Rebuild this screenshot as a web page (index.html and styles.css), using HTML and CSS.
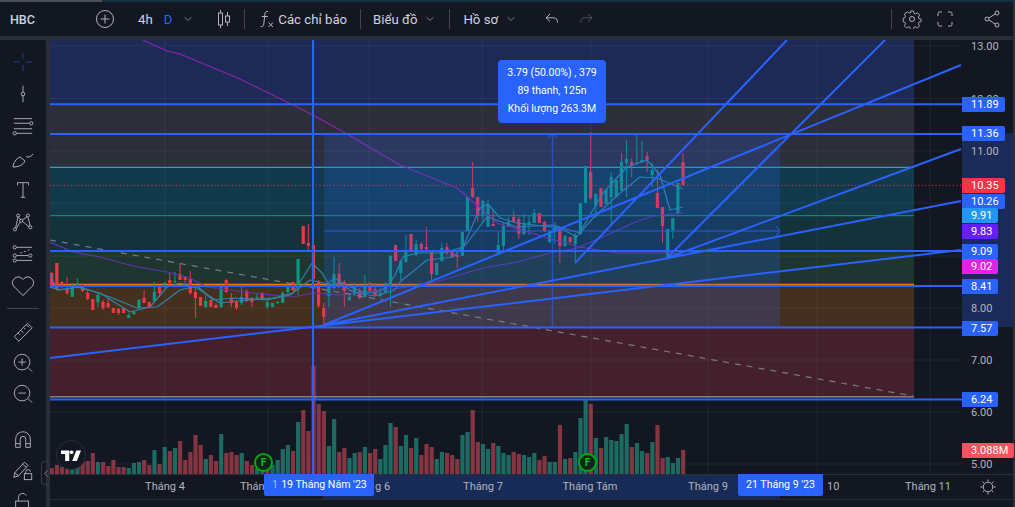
FILE: index.html
```html
<!DOCTYPE html>
<html lang="en">

<head>
    <meta charset="UTF-8">
    <title>HBC</title>
    <link rel="stylesheet" href="styles.css">
</head>

<body>
    <div class="load-strip"><div class="load-strip-fill"></div></div>

    <header class="toolbar">
        <span class="symbol">HBC</span>
        <svg class="tb-icon add-icon" width="20" height="20" viewBox="0 0 20 20"><circle cx="10" cy="10" r="8.5"/><path d="M10 5.5v9M5.5 10h9"/></svg>
        <span class="tb-text interval">4h</span>
        <span class="tb-text interval-d">D</span>
        <svg class="chevron" width="10" height="6" viewBox="0 0 10 6"><path d="M1.5 1.2 5 4.4l3.5-3.2"/></svg>
        <svg class="tb-icon candle-icon" width="16" height="20" viewBox="0 0 16 20"><path d="M4.5 1v3M4.5 16v3M11.5 3v4M11.5 13v4"/><rect x="2.5" y="4" width="4" height="12"/><rect x="9.5" y="7" width="4" height="6"/></svg>
        <div class="tb-divider"></div>
        <svg class="tb-icon fx-icon" width="16" height="18" viewBox="0 0 16 18"><path d="M9 1.5C6.5 1 6 2.5 5.8 4.5L4.8 14C4.5 16.5 3.5 17 1.5 16.5M2.8 6.5h6M9.5 12.5l4.500 4.500M14 12.500 9.500 17"/></svg>
        <span class="tb-text indicators">Các chỉ báo</span>
        <div class="tb-divider"></div>
        <span class="tb-text layout-btn">Biểu đồ</span>
        <svg class="chevron" width="10" height="6" viewBox="0 0 10 6"><path d="M1.5 1.2 5 4.4l3.5-3.2"/></svg>
        <div class="tb-divider"></div>
        <span class="tb-text profile-btn">Hồ sơ</span>
        <svg class="chevron" width="10" height="6" viewBox="0 0 10 6"><path d="M1.5 1.2 5 4.4l3.5-3.2"/></svg>
        <svg class="tb-icon undo-icon" width="14" height="12" viewBox="0 0 14 12"><path d="M5 1 1 4.8l4 3.7M1 4.8h7.500c2.500 0 4 1.700 4 4.700"/></svg>
        <svg class="tb-icon redo-icon" width="14" height="12" viewBox="0 0 14 12"><path d="M9 1l4 3.8-4 3.700M13 4.800H5.500c-2.500 0-4 1.700-4 4.700"/></svg>
        <div class="tb-spacer"></div>
        <div class="tb-divider"></div>
        <svg class="tb-icon gear-icon" width="20" height="20" viewBox="0 0 20 20"><path d="M8.3 1.200h3.400l.5 2.500 1.700.8 2.200-1.300 2.300 2.500-1.400 2.100.6 1.700 2.400.6v2.900l-2.400.6-.6 1.700 1.300 2.100-2.300 2.400-2.200-1.300-1.700.7-.5 2.500H8.300l-.5-2.500-1.700-.7-2.200 1.300-2.300-2.400 1.300-2.100-.6-1.700-2-.6V9.100l2-.6.6-1.700-1.300-2.100L4.900 2.200l2.200 1.300 1.700-.8z" transform="translate(.9 .9) scale(.91)"/><circle cx="10" cy="10" r="2.5"/></svg>
        <svg class="tb-icon full-icon" width="16" height="16" viewBox="0 0 16 16"><path d="M1 5V2.500Q1 1 2.500 1H5M11 1h2.500Q15 1 15 2.500V5M15 11v2.500Q15 15 13.500 15H11M5 15H2.500Q1 15 1 13.500V11"/></svg>
        <svg class="tb-icon share-icon" width="16" height="18" viewBox="0 0 16 18"><circle cx="13" cy="3" r="2"/><circle cx="3" cy="9" r="2"/><circle cx="13" cy="15" r="2"/><path d="M4.800 8 11.200 4M4.800 10l6.400 4"/></svg>
    </header>

    <div class="workspace">
        <aside class="tools">
            <button class="tool"><svg class="crosshair" viewBox="0 0 24 24"><path d="M12 2v7M12 15v7M2 12h7M15 12h7"/></svg></button>
            <button class="tool"><svg viewBox="0 0 24 24"><path d="M12 3v7M12 14v7"/><circle cx="12" cy="12" r="2"/></svg></button>
            <button class="tool"><svg viewBox="0 0 24 24"><path d="M2 4h20M2 9h17M2 15h20M5 20h17"/><circle cx="21" cy="9" r="1.8"/><circle cx="3" cy="20" r="1.8"/></svg></button>
            <button class="tool"><svg class="big" viewBox="0 0 24 24"><path d="M2 21c.5-4 2.500-8 7-10l5 4c-2 4-6 6-12 6ZM15 10c1 2 5 1 7-2"/></svg></button>
            <button class="tool"><svg viewBox="0 0 24 24"><path d="M6 7V4h12v3M12 4v16M9.500 20h5"/></svg></button>
            <button class="tool"><svg viewBox="0 0 24 24"><path d="M6.700 5.700 4 18.500M7.500 7l2 2.500M17.300 5.700l-6.200 4M17.800 7.500l2 9M11.500 11.500l7 5.500M9 12l-4.300 7"/><circle cx="6.700" cy="5" r="1.700"/><circle cx="17.300" cy="5" r="1.700"/><circle cx="10" cy="10.700" r="1.700"/><circle cx="20" cy="17.700" r="1.700"/><circle cx="3.300" cy="20" r="1.700"/></svg></button>
            <button class="tool"><svg viewBox="0 0 24 24"><path d="M5 4.700h17M5 13.700h13M5 19h17M9 11l2-.6M13 9.500l2-.6M17 8l2-.6"/><circle cx="3" cy="4.700" r="1.800"/><circle cx="3" cy="13.700" r="1.800"/><circle cx="20" cy="13.700" r="1.800"/><circle cx="3" cy="19" r="1.800"/></svg></button>
            <button class="tool"><svg class="big" viewBox="0 0 24 24"><path d="M12 21.500 2.800 12.300a5.700 5.700 0 0 1 8-8L12 5.500l1.200-1.200a5.700 5.700 0 0 1 8 8z"/></svg></button>
            <div class="tools-sep"></div>
            <button class="tool tool-tight"><svg viewBox="0 0 24 24"><path d="M2.500 17 17 2.500l5 5L7.500 22ZM6.500 13l2 2M9.500 10l3 3M12.500 7l2 2M15.500 4l3 3"/></svg></button>
            <button class="tool tool-tight"><svg viewBox="0 0 24 24"><circle cx="11" cy="11" r="8.500"/><path d="M17.500 17 22 21.500M7 11h8M11 7v8"/></svg></button>
            <button class="tool tool-tight"><svg viewBox="0 0 24 24"><circle cx="11" cy="11" r="8.500"/><path d="M17.500 17 22 21.500M7 11h8"/></svg></button>
            <button class="tool magnet"><svg viewBox="0 0 24 24"><path d="M4 20V11a8 8 0 0 1 16 0v9h-5v-9a3 3 0 0 0-6 0v9ZM4 16h5M15 16h5"/></svg></button>
            <button class="tool pencil"><svg viewBox="0 0 24 24"><path d="M2 20l1-5L13.500 3.500l4 3.500L7 18.500ZM11.500 5.500l4 3.500M3 15l4 3.500"/><rect x="13.500" y="16" width="8" height="6.500"/><path d="M15 16v-2a2.500 2.500 0 0 1 5 0"/></svg></button>
            <button class="tool lock"><svg viewBox="0 0 24 24"><rect x="4" y="11" width="14" height="11"/><path d="M7 11V7a4.500 4.500 0 0 1 8.500-2"/></svg></button>
        </aside>

        <main class="chart">
            <div class="pane">
                <svg id="plot" class="plot" viewBox="50 40 912 434" width="912" height="434">
                    <!-- fib zones -->
                    <rect x="50" y="40" width="864" height="64" fill="#1c2a55"/>
                    <rect x="50" y="104" width="864" height="63" fill="#2c2f3a"/>
                    <rect x="50" y="167" width="864" height="49" fill="#123a4b"/>
                    <rect x="50" y="216" width="864" height="35" fill="#14323a"/>
                    <rect x="50" y="251" width="864" height="34" fill="#1f3630"/>
                    <rect x="50" y="285" width="864" height="42" fill="#44301f"/>
                    <rect x="50" y="327" width="864" height="70" fill="#43202c"/>

                    <!-- grid -->
                    <g class="grid">
                        <path d="M165 40V474M268 40V474M369 40V474M482 40V474M591 40V474M708 40V474M817 40V474M930 40V474"/>
                        <path d="M50 46H962M50 98.500H962M50 151H962M50 203H962M50 256H962M50 308H962M50 360H962M50 412H962M50 464H962"/>
                    </g>

                    <g id="volume"></g>

                    <line x1="50" y1="167.300" x2="914" y2="167.300" stroke="#23a6b9" stroke-width="1.300"/>
                    <line x1="50" y1="215.700" x2="914" y2="215.700" stroke="#1a7f78" stroke-width="1.300"/>
                    <line x1="50" y1="284.500" x2="914" y2="284.500" stroke="#f57c00" stroke-width="1.500"/>
                    <line x1="50" y1="396.800" x2="914" y2="396.800" stroke="#9598a1" stroke-width="1.200"/>

                    <g id="candles"></g>

                    <!-- moving averages -->
                    <g class="ma">
                        <polyline stroke="#8e24aa" points="143,40 167,51 180,54 240,79 293,105 313,115 340,130 400,165 457,188 497,223 548,238 580,247 617,253 667,253 683,254"/>
                        <polyline stroke="#5e35b1" points="50,242 73,252 100,257 133,266 167,272 190,278 207,287 253,293 293,297 313,293 340,295 400,288 432,283 483,268 517,262 550,253 577,248 607,235 633,223 653,216 683,213"/>
                        <polyline stroke="#2e86ab" points="50,274 57,290 77,287 100,293 130,312 150,307 167,287 180,283 197,288 220,303 247,300 273,298 293,293 312,263 322,273 328,283 335,278 345,285 353,288 363,292 375,293 387,287 395,275 403,257 417,253 443,253 463,247 480,208 488,204 500,218 517,223 560,228 577,237 587,220 603,193 627,167 647,160 660,175 670,210 683,207"/>
                        <polyline stroke="#2e86ab" points="50,287 60,290 80,287 110,297 137,308 157,307 180,290 197,286 213,300 233,298 267,300 290,295 310,280 333,285 340,283 353,292 375,296 395,290 400,282 427,260 453,257 467,243 487,217 517,227 553,225 580,233 593,218 620,193 640,177 657,178 683,189"/>
                    </g>

                    <!-- date and price range -->
                    <rect x="324" y="133" width="456" height="194" fill="#2962ff" fill-opacity=".2"/>
                    <path class="range-mark" d="M324 231H779M776 226l4 5-4 5"/>
                    <path class="range-mark" d="M552.5 327V135M548 138l4.5-4 4.500 4"/>

                    <line class="dots" x1="50" y1="185.300" x2="962" y2="185.300"/>
                    <line class="dashes" x1="50" y1="240" x2="913" y2="396"/>

                    <!-- drawings -->
                    <g class="drawn">
                        <path d="M50 104.300H962M50 134H962M50 251H962M50 286H962M50 327.600H962M50 399.600H962"/>
                        <path d="M313 40V474"/>
                        <path d="M324 325 961 65M324 325 961 201M50 358 961 250M575 263 787 40M667 258 885 40M667 258 961 149"/>
                    </g>
                </svg>

                <div class="ruler-tip">
                    <div>3.79 (50.00%) , 379</div>
                    <div>89 thanh, 125n</div>
                    <div>Khối lượng 263.3M</div>
                </div>

                <div class="logo-badge">
                    <svg width="20" height="11" viewBox="0 0 34 22" preserveAspectRatio="none"><path d="M14 1H0v7h7v14h7ZM27 22h-8l7-21h8ZM18 8a3.500 3.500 0 1 0 0-7 3.500 3.500 0 0 0 0 7Z"/></svg>
                </div>
                <div class="earn-mark" style="left: 204px; top: 413px">F</div>
                <div class="earn-mark" style="left: 528px; top: 413px">F</div>
                <div class="collapse-btn">
                    <svg width="4" height="7" viewBox="0 0 4 7"><path d="M3.500 .5 .5 3.500l3 3"/></svg>
                </div>
            </div>

            <div class="price-axis">
                <div class="price-band"></div>
                <span class="price" style="top: 6px">13.00</span>
                <span class="price" style="top: 58.5px">12.00</span>
                <span class="price" style="top: 111px">11.00</span>
                <span class="price" style="top: 267.5px">8.00</span>
                <span class="price" style="top: 320px">7.00</span>
                <span class="price" style="top: 372px">6.00</span>
                <span class="price" style="top: 424px">5.00</span>
                <span class="tag tag-blue" style="top: 57px">11.89</span>
                <span class="tag tag-blue" style="top: 86px">11.36</span>
                <span class="tag tag-red" style="top: 138px">10.35</span>
                <span class="tag tag-blue" style="top: 153.5px">10.26</span>
                <span class="tag tag-sky" style="top: 168px">9.91</span>
                <span class="tag tag-violet" style="top: 183.5px">9.83</span>
                <span class="tag tag-blue" style="top: 204px">9.09</span>
                <span class="tag tag-pink" style="top: 219px">9.02</span>
                <span class="tag tag-blue" style="top: 239px">8.41</span>
                <span class="tag tag-blue" style="top: 281px">7.57</span>
                <span class="tag tag-blue" style="top: 352px">6.24</span>
                <span class="tag tag-vol" style="top: 402.5px">3.088M</span>
            </div>

            <div class="time-axis">
                <div class="time-band"></div>
                <span class="month" style="left: 65px">Tháng 4</span>
                <span class="month-cut" style="left: 190px">Thán</span>
                <span class="month-cut" style="left: 325px">g 6</span>
                <span class="month" style="left: 383px">Tháng 7</span>
                <span class="month" style="left: 490px">Tháng Tám</span>
                <span class="month" style="left: 608px">Tháng 9</span>
                <span class="month-cut" style="left: 777px">10</span>
                <span class="month" style="left: 828px">Tháng 11</span>
                <span class="date-tag date-from"><i>1</i>19 Tháng Năm '23</span>
                <span class="date-tag date-to">21 Tháng 9 '23</span>
            </div>
            <div class="axis-corner">
                <svg width="16" height="16" viewBox="0 0 16 16"><circle cx="8" cy="8" r="4.8"/><path d="M8 .5v2M8 13.500v2M.5 8h2M13.500 8h2M2.700 2.700l1.500 1.500M11.800 11.800l1.500 1.500M2.700 13.300l1.500-1.500M11.800 4.200l1.500-1.500"/></svg>
            </div>
        </main>
    </div>

    <script src="chart.js"></script>
</body>

</html>
```

FILE: styles.css
```css
* {
    box-sizing: border-box;
}

html,
body {
    height: 100%;
    overflow: hidden;
}

body {
    margin: 0;
    display: flex;
    flex-direction: column;
    background-color: #2a2e39;
    color: #d1d4dc;
    font-family: Roboto, "Noto Sans", sans-serif;
}

.load-strip {
    height: 2px;
    background-color: #17303f;
}

.load-strip-fill {
    width: 102px;
    height: 100%;
    background-color: #4a4f5b;
}

/* top bar */
.toolbar {
    flex: none;
    height: 34px;
    margin-right: 2px;
    display: flex;
    align-items: center;
    background-color: #131722;
    padding-left: 10px;
}

.symbol {
    width: 85px;
    font-size: 12.5px;
    font-weight: 500;
}

.tb-text {
    font-size: 13.2px;
}

.tb-icon {
    flex: none;
    fill: none;
    stroke: #b2b5be;
    stroke-width: 1;
}

.chevron {
    flex: none;
    margin-left: 8px;
    fill: none;
    stroke: #787b86;
    stroke-width: 1;
}

.tb-divider {
    flex: none;
    width: 1px;
    height: 20px;
    background-color: #434651;
}

.tb-spacer {
    flex: 1;
}

.add-icon {
    margin-right: 23px;
}

.interval-d {
    margin-left: 11px;
    color: #2962ff;
}

.interval-d + .chevron {
    margin-left: 11px;
}

.candle-icon {
    margin: 0 12px 0 23px;
}

.fx-icon {
    margin: 0 3px 0 14px;
}

.indicators {
    margin-right: 13px;
}

.layout-btn {
    margin-left: 12px;
}

.profile-btn {
    margin-left: 13px;
}

.chevron + .tb-divider {
    margin-left: 14px;
}

.undo-icon {
    margin-left: 29px;
}

.redo-icon {
    margin-left: 20px;
    stroke: #50535e;
}

.gear-icon {
    margin-left: 10px;
}

.full-icon {
    margin-left: 15px;
}

.share-icon {
    margin: 0 13px 0 31px;
}

.workspace {
    flex: 1;
    display: flex;
    margin-top: 4px;
    min-height: 0;
}

/* left drawing tools */
.tools {
    flex: none;
    width: 46px;
    padding-top: 6px;
    margin-right: 4px;
    display: flex;
    flex-direction: column;
    align-items: center;
    background-color: #131722;
    border-top-right-radius: 3px;
}

.tool {
    flex: none;
    width: 46px;
    height: 32px;
    padding: 0;
    border: none;
    background: none;
    display: flex;
    align-items: center;
    justify-content: center;
}

.tool svg {
    width: 22px;
    height: 22px;
    fill: none;
    stroke: #b2b5be;
    stroke-width: 1;
}

.tool svg.big {
    width: 24px;
    height: 24px;
}

.tool svg.crosshair {
    stroke: #24439e;
}

.tools-sep {
    flex: none;
    width: 32px;
    height: 1px;
    margin: 6px 0 7px;
    background-color: #434651;
}

.tool-tight {
    height: 31px;
}

.tool.magnet {
    margin-top: 15px;
}

.tool.pencil {
    height: 28px;
}

.tool.lock {
    height: 36px;
}

/* chart */
.chart {
    flex: 1;
    display: grid;
    grid-template-columns: 912px 51px;
    grid-template-rows: 434px 26px;
    align-content: start;
    background-color: #131722;
    margin-right: 2px;
    height: 100%;
}

.pane {
    position: relative;
    background-color: #131722;
}

.plot {
    display: block;
}

.grid path {
    fill: none;
    stroke: #ffffff;
    stroke-opacity: .055;
    stroke-width: 1;
}

.ma polyline {
    fill: none;
    stroke-width: 1.2;
    stroke-linejoin: round;
}

.range-mark {
    fill: none;
    stroke: #2962ff;
    stroke-width: 1.5;
    stroke-opacity: .55;
}

.dots {
    stroke: #f23645;
    stroke-width: 1;
    stroke-dasharray: 1 2.5;
}

.dashes {
    stroke: #787b86;
    stroke-width: 1.2;
    stroke-dasharray: 6 6;
}

.drawn path {
    fill: none;
    stroke: #2962ff;
    stroke-width: 2;
}

.ruler-tip {
    position: absolute;
    left: 448px;
    top: 20px;
    width: 108px;
    height: 63px;
    padding-top: 4px;
    border-radius: 4px;
    background-color: #2962ff;
    color: #ffffff;
    font-size: 10.5px;
    line-height: 18px;
    text-align: center;
}

.logo-badge {
    position: absolute;
    left: 6px;
    top: 400px;
    width: 30px;
    height: 30px;
    display: flex;
    align-items: center;
    justify-content: center;
    border: 1px solid #2a2e39;
    border-radius: 50%;
    background-color: #131722;
}

.logo-badge svg {
    fill: #ffffff;
}

.earn-mark {
    position: absolute;
    width: 19px;
    height: 19px;
    display: flex;
    align-items: center;
    justify-content: center;
    border: 2px solid #00a80f;
    border-radius: 50%;
    background-color: #0e2418;
    color: #00c211;
    font-size: 10px;
    font-weight: 700;
}

.collapse-btn {
    position: absolute;
    left: -9px;
    top: 421px;
    width: 8px;
    height: 24px;
    display: flex;
    align-items: center;
    justify-content: center;
    border: 1px solid #363a45;
    border-right: none;
    border-radius: 4px 0 0 4px;
}

.collapse-btn svg {
    fill: none;
    stroke: #787b86;
}

.price-axis {
    position: relative;
    background-color: #131722;
}

.price-band {
    position: absolute;
    left: 0;
    right: 0;
    top: 93px;
    height: 194px;
    background-color: #1a2b57;
}

.price {
    position: absolute;
    left: 9px;
    margin-top: -6px;
    color: #b2b5be;
    font-size: 11px;
    line-height: 14px;
}

.tag {
    position: absolute;
    left: 0;
    height: 15px;
    padding: 0 6px 0 9px;
    border-radius: 0 2px 2px 0;
    color: #ffffff;
    font-size: 11px;
    line-height: 16px;
}

.tag-blue {
    background-color: #2962ff;
}

.tag-red {
    background-color: #f23645;
}

.tag-sky {
    background-color: #2196f3;
}

.tag-violet {
    background-color: #651fff;
}

.tag-pink {
    background-color: #e91ee9;
}

.tag-vol {
    background-color: #f7525f;
}

.time-axis {
    position: relative;
    border-top: 1px solid #2a2e39;
    border-bottom: 1px solid #2a2e39;
}

.time-band {
    position: absolute;
    left: 273px;
    width: 457px;
    top: 0;
    bottom: 0;
    background-color: #182a56;
}

.month,
.month-cut {
    position: absolute;
    top: 4px;
    color: #b2b5be;
    font-size: 11px;
    line-height: 15px;
}

.month {
    width: 100px;
    text-align: center;
}

.date-tag {
    position: absolute;
    top: -1px;
    height: 22px;
    border-radius: 0 0 2px 2px;
    background-color: #2962ff;
    color: #ffffff;
    font-size: 10.6px;
    line-height: 22px;
    text-align: center;
}

.date-tag i {
    position: absolute;
    left: 8px;
    font-style: normal;
    opacity: .55;
}

.date-from {
    left: 214px;
    width: 110px;
    padding-left: 10px;
}

.date-to {
    left: 688px;
    width: 85px;
}

.axis-corner {
    display: flex;
    align-items: center;
    justify-content: center;
    border-top: 1px solid #2a2e39;
    border-bottom: 1px solid #2a2e39;
}

.axis-corner svg {
    fill: none;
    stroke: #b2b5be;
    stroke-width: 1;
}
```

FILE: chart.js
```js
// Candles as [bodyTop, bodyBottom, wickTop, wickBottom, up], in chart pixels
const candles = [
    [273, 285, 272, 287, 0], [263, 289, 263, 289, 0], [282, 287, 281, 288, 0], [289, 293, 277, 295, 0],
    [287, 297, 283, 297, 1], [283, 285, 278, 287, 1], [284, 291, 283, 292, 0], [293, 299, 290, 300, 0],
    [299, 310, 299, 310, 0], [295, 302, 293, 307, 1], [302, 308, 300, 310, 0], [303, 307, 298, 308, 0],
    [308, 313, 308, 313, 0], [309, 313, 308, 315, 0], [308, 313, 308, 313, 0], [315, 318, 313, 318, 1],
    [312, 314, 310, 315, 1], [300, 308, 299, 309, 1], [298, 303, 290, 303, 0], [302, 307, 302, 307, 0],
    [292, 301, 282, 302, 1], [287, 293, 285, 297, 0], [283, 287, 282, 288, 1], [280, 283, 273, 283, 0],
    [281, 282, 272, 283, 1], [274, 280, 263, 280, 0], [277, 280, 276, 284, 0], [279, 293, 271, 295, 0],
    [292, 298, 288, 318, 0], [297, 306, 297, 306, 0], [301, 307, 295, 308, 1], [300, 307, 300, 307, 0],
    [305, 308, 303, 308, 0], [287, 307, 285, 308, 1], [280, 292, 279, 293, 0], [298, 303, 293, 307, 0],
    [302, 308, 300, 310, 0], [297, 303, 287, 305, 1], [291, 301, 289, 302, 0], [298, 302, 297, 307, 0],
    [297, 298, 293, 299, 1], [293, 299, 292, 300, 0], [302, 307, 300, 309, 1], [303, 307, 303, 307, 1],
    [302, 303, 301, 304, 1], [293, 303, 291, 303, 1], [285, 292, 283, 293, 1], [282, 290, 282, 291, 0],
    [259, 287, 259, 295, 1], [226, 244, 226, 244, 0], [243, 246, 224, 250, 0], [245, 279, 234, 280, 0],
    [282, 306, 280, 308, 0], [308, 317, 303, 327, 0], [287, 296, 287, 307, 1], [274, 288, 257, 290, 1],
    [274, 287, 263, 288, 0], [282, 291, 280, 307, 0], [297, 300, 295, 301, 1], [287, 295, 283, 296, 1],
    [291, 298, 288, 299, 0], [285, 297, 275, 298, 1], [283, 291, 282, 292, 0], [289, 295, 283, 296, 0],
    [293, 296, 288, 297, 1], [285, 292, 282, 293, 1], [256, 285, 255, 307, 1], [245, 261, 245, 261, 0],
    [261, 273, 260, 280, 1], [250, 262, 235, 263, 1], [234, 250, 234, 250, 0], [244, 255, 240, 256, 1],
    [244, 249, 242, 250, 0], [247, 249, 227, 250, 0], [251, 274, 250, 283, 0], [263, 275, 263, 275, 1],
    [248, 261, 243, 262, 1], [247, 253, 243, 255, 0], [251, 257, 250, 258, 0], [255, 257, 253, 268, 0],
    [232, 256, 232, 256, 1], [197, 231, 197, 231, 1], [188, 197, 162, 198, 0], [197, 215, 197, 222, 0],
    [201, 215, 200, 223, 1], [205, 227, 200, 227, 1], [224, 226, 209, 226, 0], [245, 255, 232, 255, 1],
    [226, 246, 222, 250, 1], [222, 227, 217, 227, 1], [217, 222, 211, 222, 0], [219, 234, 217, 239, 0],
    [223, 234, 214, 235, 1], [222, 225, 216, 235, 1], [213, 223, 209, 223, 1], [213, 223, 213, 223, 0],
    [222, 231, 221, 232, 0], [232, 242, 230, 243, 1], [228, 232, 222, 244, 1], [228, 246, 227, 263, 0],
    [236, 246, 235, 247, 1], [237, 242, 237, 243, 0], [235, 244, 233, 263, 1], [203, 234, 203, 235, 1],
    [166, 203, 166, 203, 1], [172, 198, 132, 200, 0], [194, 206, 193, 218, 1], [188, 207, 188, 207, 0],
    [190, 204, 190, 204, 1], [177, 197, 172, 226, 1], [180, 197, 180, 197, 1], [162, 190, 153, 191, 1],
    [159, 163, 140, 197, 1], [162, 165, 158, 177, 0], [162, 163, 135, 165, 1], [160, 162, 141, 163, 1],
    [156, 160, 152, 172, 0], [170, 175, 163, 187, 1], [193, 208, 170, 208, 0], [207, 226, 207, 243, 0],
    [229, 257, 229, 260, 1], [218, 230, 218, 239, 1], [183, 213, 183, 213, 1], [162, 185, 153, 186, 0]
];

// Volume bar heights, same order as the candles
const volumes = [
    6, 9, 7, 6, 6, 9, 12, 13, 21, 12, 12, 8, 14, 7, 7, 6, 11, 12, 14, 9, 24, 10, 27, 23, 26, 33, 14, 22, 39, 29, 15,
    19, 13, 40, 21, 22, 19, 21, 13, 9, 6, 4, 4, 9, 14, 25, 29, 23, 52, 64, 43, 108, 70, 63, 28, 55, 22, 26, 16, 21,
    22, 27, 21, 25, 15, 29, 51, 47, 28, 39, 26, 36, 19, 30, 27, 15, 22, 21, 19, 15, 39, 42, 64, 32, 30, 25, 31, 28,
    21, 19, 22, 20, 19, 17, 21, 14, 18, 12, 12, 49, 15, 16, 22, 56, 75, 70, 36, 26, 37, 34, 33, 40, 50, 27, 31, 23,
    21, 32, 49, 16, 17, 11, 16, 24
];

// Colour of each volume bar as runs, 1 is green
const volumeUp = ('0000 11 000 1 00000 111 00 1 0 1 0 1 00000 1 00 1 000 1 00 11 0 1111 0 1 00000 11 00 11 0 1 00 111 0 ' +
    '11 0 1 000 11 000 11 00 11 0 111 00 111 00 11 0 1 0 111 0 1 0 11111 0 11 0 1 00 111 0').replace(/ /g, '');

const firstX = 51.7;
const step = 5.133;
const svgNs = 'http://www.w3.org/2000/svg';

function addRect(group, x, y, width, height, fill) {
    const rect = document.createElementNS(svgNs, 'rect');
    rect.setAttribute('x', x);
    rect.setAttribute('y', y);
    rect.setAttribute('width', width);
    rect.setAttribute('height', height);
    rect.setAttribute('fill', fill);
    group.appendChild(rect);
}

const volumeGroup = document.getElementById('volume');
volumes.forEach((height, i) => {
    const fill = volumeUp[i] === '1' ? 'rgba(38, 190, 160, 0.5)' : 'rgba(247, 82, 95, 0.5)';
    addRect(volumeGroup, firstX + i * step - 2, 474 - height, 4.2, height, fill);
});

const candleGroup = document.getElementById('candles');
candles.forEach((c, i) => {
    const x = firstX + i * step;
    const fill = c[4] ? '#089981' : '#f23645';
    addRect(candleGroup, x - 0.5, c[2], 1, c[3] - c[2], fill);
    addRect(candleGroup, x - 1.6, c[0], 3.2, Math.max(c[1] - c[0], 1), fill);
});
```
